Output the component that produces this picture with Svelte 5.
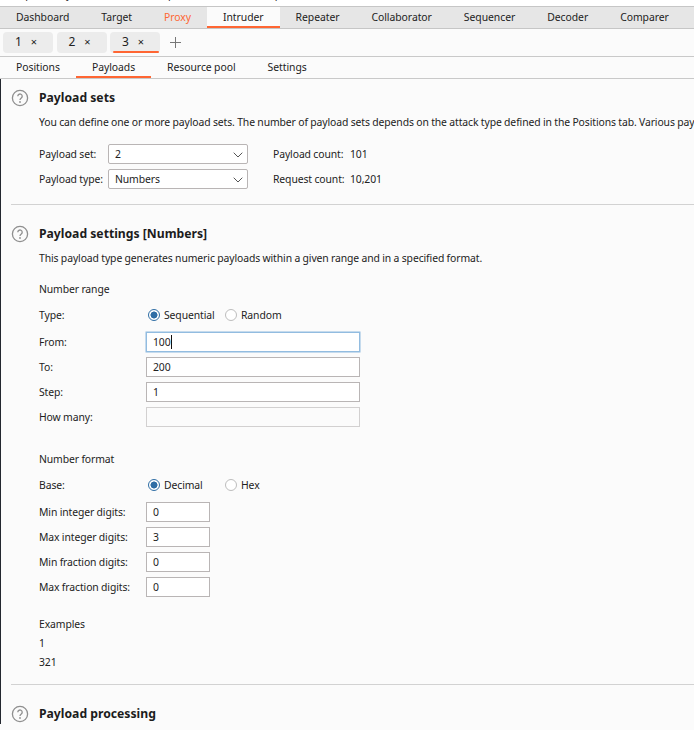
<script>
  const mainTabs = ['Dashboard','Target','Proxy','Intruder','Repeater','Collaborator','Sequencer','Decoder','Comparer'];
  const menu = ['Burp','Project','Intruder','Repeater','View','Help'];
  const subTabs = ['Positions','Payloads','Resource pool','Settings'];
  const rangeRows = [['From:','100',true],['To:','200',false],['Step:','1',false],['How many:','',false]];
  const formatRows = [['Min integer digits:','0'],['Max integer digits:','3'],['Min fraction digits:','0'],['Max fraction digits:','0']];
</script>

{#snippet help()}
  <svg class="help" width="18" height="18" viewBox="0 0 18 18" aria-hidden="true">
    <circle cx="9" cy="9" r="7.6" fill="none" stroke="#8f8f8f" stroke-width="1.3"/>
    <path d="M6.8 7.2a2.2 2.2 0 1 1 3.5 1.8c-.8.6-1.3 1-1.3 2" fill="none" stroke="#8f8f8f" stroke-width="1.3"/>
    <circle cx="9" cy="13" r=".9" fill="#8f8f8f"/>
  </svg>
{/snippet}

{#snippet chevron()}
  <svg class="chev" width="10" height="6" viewBox="0 0 10 6" aria-hidden="true">
    <path d="M.7.7l4.3 4.3 4.3-4.3" fill="none" stroke="#555" stroke-width="1"/>
  </svg>
{/snippet}

{#snippet radio(label, on, width)}
  <span class="radio" style="width:{width}px">
    <span class="dot" class:on></span>{label}
  </span>
{/snippet}

<div class="page">
  <div class="menu">
    {#each menu as m}<span>{m}</span>{/each}
  </div>

  <nav class="main-tabs">
    {#each mainTabs as t}
      <div class="mtab" class:proxy={t === 'Proxy'} class:active={t === 'Intruder'}>{t}</div>
    {/each}
  </nav>

  <div class="inst-tabs">
    <div class="inst">1<span class="x">×</span></div>
    <div class="inst">2<span class="x">×</span></div>
    <div class="inst cur">3<span class="x">×</span></div>
    <svg class="plus" width="11" height="11" viewBox="0 0 11 11" aria-hidden="true"><path d="M5.5 0v11M0 5.5h11" stroke="#777" stroke-width="1"/></svg>
  </div>

  <div class="sub-tabs">
    {#each subTabs as t}
      <div class="stab" class:active={t === 'Payloads'}>{t}</div>
    {/each}
  </div>

  <div class="body">
    <section class="sec first">
      <h2>{@render help()}Payload sets</h2>
      <p class="desc nowrap">You can define one or more payload sets. The number of payload sets depends on the attack type defined in the Positions tab. Various payload types are available for each payload set, and each payload type can be customized in different ways.</p>
      <div class="sets">
        <div class="set-row">
          <span class="set-label">Payload set:</span>
          <div class="select">2{@render chevron()}</div>
          <span class="count"><span class="count-label">Payload count:</span>101</span>
        </div>
        <div class="set-row">
          <span class="set-label">Payload type:</span>
          <div class="select">Numbers{@render chevron()}</div>
          <span class="count"><span class="count-label">Request count:</span>10,201</span>
        </div>
      </div>
    </section>

    <section class="sec">
      <h2>{@render help()}Payload settings [Numbers]</h2>
      <p class="desc">This payload type generates numeric payloads within a given range and in a specified format.</p>

      <div class="group-title">Number range</div>
      <div class="row radios">
        <span class="lbl">Type:</span>
        {@render radio('Sequential', true, 77)}
        {@render radio('Random', false, 70)}
      </div>
      {#each rangeRows as [label, value, focus]}
        <div class="row">
          <span class="lbl">{label}</span>
          <div class="input wide" class:focus class:disabled={label === 'How many:'}>{value}{#if focus}<span class="caret"></span>{/if}</div>
        </div>
      {/each}

      <div class="group-title second">Number format</div>
      <div class="row radios">
        <span class="lbl">Base:</span>
        {@render radio('Decimal', true, 77)}
        {@render radio('Hex', false, 50)}
      </div>
      {#each formatRows as [label, value]}
        <div class="row">
          <span class="lbl">{label}</span>
          <div class="input narrow">{value}</div>
        </div>
      {/each}

      <div class="examples">
        <div>Examples</div>
        <div>1</div>
        <div>321</div>
      </div>
    </section>

    <section class="sec last">
      <h2>{@render help()}Payload processing</h2>
    </section>
  </div>
</div>

<style>
  :global(body) { margin: 0; background: #fbfbfb; }
  .page {
    width: 694px; height: 730px; overflow: hidden;
    font-family: "Noto Sans", sans-serif; font-size: 10.4px; letter-spacing: -0.1px; word-spacing: -0.2px; color: #222;
    background: #fbfbfb;
  }
  .menu {
    height: 6px; background: #fff; overflow: hidden;
    display: flex; white-space: nowrap; line-height: 14px; padding-left: 8px;
  }
  .menu span { margin-top: -13px; margin-right: 17px; }
  .menu span:nth-child(1) { margin-right: 19px; }
  .menu span:nth-child(2) { margin-right: 15px; }
  .menu span:nth-child(5) { margin-right: 20px; }
  .main-tabs {
    display: flex; height: 21px; background: #e6e6e6;
    border-top: 1px solid #c6c6c6; border-bottom: 1px solid #c6c6c6;
  }
  .mtab { padding: 0 16px; line-height: 20px; height: 21px; box-sizing: border-box; letter-spacing: -0.05px; }
  .mtab.proxy { color: #ff6633; }
  .mtab.active { background: #fbfbfb; border-bottom: 2px solid #ff6633; }
  .inst-tabs {
    display: flex; align-items: center; gap: 3.5px; height: 27px; padding-left: 3px;
    border-bottom: 1px solid #c9c9c9;
  }
  .inst {
    width: 50px; height: 21px; box-sizing: border-box; border-radius: 4px; background: #ececec;
    padding-left: 12px; line-height: 20px; font-size: 12px; position: relative;
  }
  .x { margin-left: 9px; font-size: 11px; }
  .inst.cur::after {
    content: ""; position: absolute; left: 3px; right: 1px; bottom: 0; height: 2px; background: #ff6633; border-radius: 1px;
  }
  .plus { margin-left: 6px; }
  .sub-tabs { display: flex; height: 21px; border-bottom: 1px solid #c9c9c9; }
  .stab { padding: 0 16px; line-height: 21px; height: 21px; box-sizing: border-box; letter-spacing: -0.05px; }
  .stab.active { border-bottom: 2px solid #ff6633; }
  .body { border-left: 1px solid #23272f; }
  .sec { margin-left: 10px; border-bottom: 1px solid #d2d2d2; padding-left: 28px; }
  .sec.first { height: 125px; }
  .sec.last { border-bottom: 0; }
  h2 {
    margin: 0; position: relative; font-size: 12.2px; letter-spacing: 0; word-spacing: 0; font-weight: 700; line-height: 20px; padding-top: 19px; color: #1c1c1c;
  }
  .help { position: absolute; left: -28px; top: 20px; }
  .sec.first h2 { padding-top: 9px; }
  .sec.first .help { top: 10px; }
  .desc { margin: 4px 0 0; line-height: 20px; }
  .nowrap { white-space: nowrap; overflow: visible; }
  .sets { margin-top: 12px; display: flex; flex-direction: column; gap: 5px; }
  .set-row { display: flex; align-items: center; height: 20px; white-space: nowrap; }
  .set-label { width: 69px; flex: none; }
  .select {
    width: 140px; height: 20px; flex: none; box-sizing: border-box; border: 1px solid #b9b5b5; border-radius: 2px;
    background: #fff; padding-left: 6px; line-height: 18px; position: relative;
  }
  .chev { position: absolute; right: 4px; top: 7px; }
  .count { margin-left: 25px; display: flex; }
  .count-label { width: 77px; flex: none; }
  .group-title { margin-top: 11px; line-height: 20px; }
  .group-title.second { margin-top: 20px; }
  .row { display: flex; align-items: center; height: 25px; }
  .radios { height: 27px; margin-top: 2px; margin-bottom: 1px; }
  .lbl { width: 107px; flex: none; }
  .radio { display: inline-flex; align-items: center; flex: none; }
  .dot {
    width: 10px; height: 10px; border: 1px solid #bdbdbd; border-radius: 50%; margin: 0 4px 0 2px; background: #fff; flex: none;
    box-sizing: content-box;
  }
  .dot.on { border: 1px solid #2f6ea5; background: radial-gradient(circle, #2f6ea5 0 3.2px, #fff 3.8px); }
  .input {
    height: 20px; box-sizing: border-box; border: 1px solid #b9b5b5; background: #fff;
    padding-left: 6px; line-height: 18px; position: relative;
  }
  .wide { width: 214px; }
  .narrow { width: 64px; }
  .input.disabled { border-color: #d2d0d0; background: #fbfbfb; }
  .input.focus { border-color: #92bce0; box-shadow: 0 0 0 .5px #92bce0; }
  .caret { display: inline-block; width: 1px; height: 14px; background: #111; vertical-align: -3px; }
  .examples { margin-top: 16px; padding-bottom: 12px; line-height: 19px; }
</style>
